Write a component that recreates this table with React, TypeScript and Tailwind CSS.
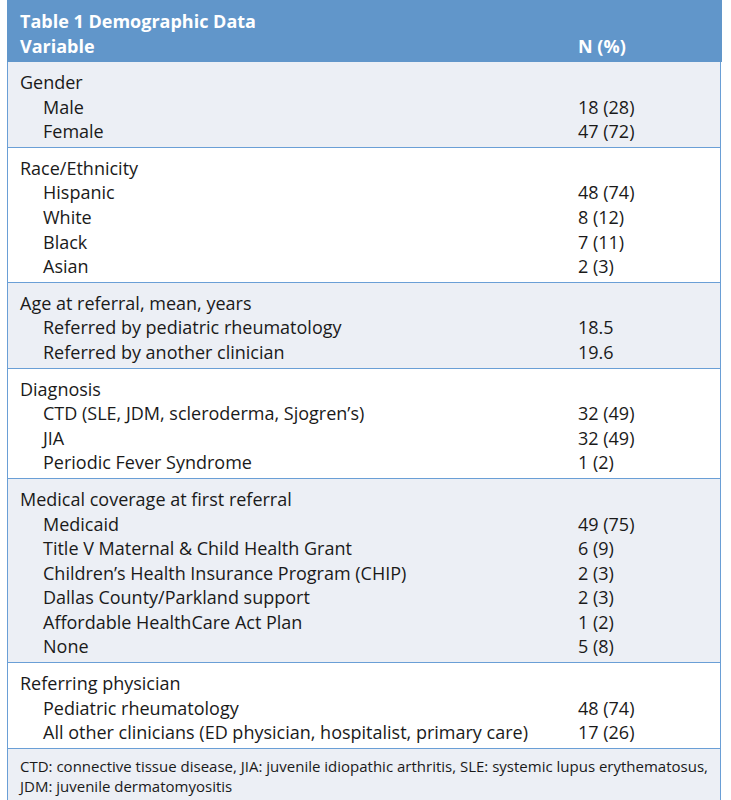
import React from "react";

type Row = { label: string; value?: string; indent?: boolean };
type Section = { rows: Row[]; shaded: boolean };

const sections: Section[] = [
  {
    shaded: true,
    rows: [
      { label: "Gender" },
      { label: "Male", value: "18 (28)", indent: true },
      { label: "Female", value: "47 (72)", indent: true },
    ],
  },
  {
    shaded: false,
    rows: [
      { label: "Race/Ethnicity" },
      { label: "Hispanic", value: "48 (74)", indent: true },
      { label: "White", value: "8 (12)", indent: true },
      { label: "Black", value: "7 (11)", indent: true },
      { label: "Asian", value: "2 (3)", indent: true },
    ],
  },
  {
    shaded: true,
    rows: [
      { label: "Age at referral, mean, years" },
      { label: "Referred by pediatric rheumatology", value: "18.5", indent: true },
      { label: "Referred by another clinician", value: "19.6", indent: true },
    ],
  },
  {
    shaded: false,
    rows: [
      { label: "Diagnosis" },
      { label: "CTD (SLE, JDM, scleroderma, Sjogren\u2019s)", value: "32 (49)", indent: true },
      { label: "JIA", value: "32 (49)", indent: true },
      { label: "Periodic Fever Syndrome", value: "1 (2)", indent: true },
    ],
  },
  {
    shaded: true,
    rows: [
      { label: "Medical coverage at first referral" },
      { label: "Medicaid", value: "49 (75)", indent: true },
      { label: "Title V Maternal & Child Health Grant", value: "6 (9)", indent: true },
      { label: "Children\u2019s Health Insurance Program (CHIP)", value: "2 (3)", indent: true },
      { label: "Dallas County/Parkland support", value: "2 (3)", indent: true },
      { label: "Affordable HealthCare Act Plan", value: "1 (2)", indent: true },
      { label: "None", value: "5 (8)", indent: true },
    ],
  },
  {
    shaded: false,
    rows: [
      { label: "Referring physician" },
      { label: "Pediatric rheumatology", value: "48 (74)", indent: true },
      {
        label: "All other clinicians (ED physician, hospitalist, primary care)",
        value: "17 (26)",
        indent: true,
      },
    ],
  },
];

export default function App() {
  return (
    <div className="min-h-[800px] bg-white [font-family:'Open_Sans','Liberation_Sans',sans-serif] text-[#1a1a1a]">
      <div className="ml-[7px] w-[715px]">
        <div className="bg-[#6196ca] pl-[13px] pt-[9px] pb-[3px] text-white font-bold text-[18px] leading-[25px]">
          <div>Table 1 Demographic Data</div>
          <div className="grid grid-cols-[558px_1fr]">
            <div>Variable</div>
            <div>N (%)</div>
          </div>
        </div>
        <div className="border-x border-b border-[#6a9fd6] w-[714px]">
          {sections.map((s, i) => (
            <div
              key={i}
              className={`${s.shaded ? "bg-[#eceff5]" : "bg-white"} ${i > 0 ? "border-t border-[#6a9fd6]" : ""} pl-[12px] pt-[8px] pb-[3px] text-[18px] leading-[24.6px]`}
            >
              {s.rows.map((r, j) => (
                <div key={j} className="grid grid-cols-[558px_1fr]">
                  <div className={r.indent ? "pl-[23px]" : ""}>{r.label}</div>
                  <div>{r.value ?? ""}</div>
                </div>
              ))}
            </div>
          ))}
          <div className="border-t border-[#6a9fd6] bg-[#eceff5] pl-[12px] pt-[7px] pb-[4px] text-[15px] leading-[20px]">
            CTD: connective tissue disease, JIA: juvenile idiopathic arthritis, SLE: systemic lupus erythematosus,
            <br />
            JDM: juvenile dermatomyositis
          </div>
        </div>
      </div>
    </div>
  );
}
